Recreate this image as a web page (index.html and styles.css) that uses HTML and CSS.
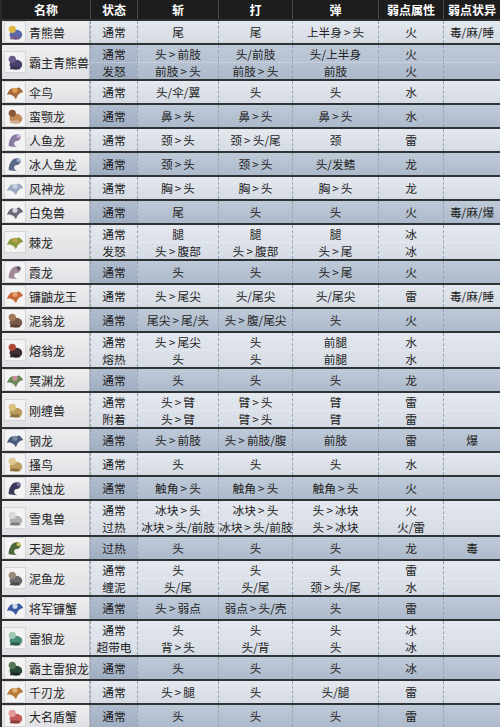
FILE: index.html
```html
<!DOCTYPE html>
<html lang="zh-CN">
<head>
<meta charset="utf-8">
<title>怪物弱点表</title>
<link rel="stylesheet" href="styles.css">
</head>
<body>
<div class="tbl">
  <div class="row head">
    <div class="c">名称</div><div class="c">状态</div><div class="c">斩</div><div class="c">打</div><div class="c">弹</div><div class="c">弱点属性</div><div class="c">弱点状异</div>
  </div>

  <div class="row lt">
    <div class="c name"><svg class="ic" viewBox="0 0 22 22"><rect width="22" height="22" fill="#f3f3f3"/><ellipse cx="12" cy="14" rx="7" ry="5.5" fill="#5a6aa8"/><circle cx="8" cy="8" r="4" fill="#e0b84a"/><path d="M5 19h12l-2-3H7z" fill="#7a5a8a"/></svg><span>青熊兽</span></div>
    <div class="c st">通常</div><div class="c">尾</div><div class="c">尾</div><div class="c">上半身 &gt; 头</div><div class="c">火</div><div class="c">毒/麻/睡</div>
  </div>

  <div class="row dk two">
    <div class="c name"><svg class="ic" viewBox="0 0 22 22"><rect width="22" height="22" fill="#f3f3f3"/><ellipse cx="12" cy="14" rx="7" ry="5.5" fill="#4a3f6a"/><circle cx="8" cy="8" r="4" fill="#6b5a8a"/><path d="M5 19h12l-2-3H7z" fill="#3a3050"/></svg><span>霸主青熊兽</span></div>
    <div class="c st"><div class="l">通常</div><div class="l">发怒</div></div>
    <div class="c"><div class="l">头 &gt; 前肢</div><div class="l">前肢 &gt; 头</div></div>
    <div class="c"><div class="l">头/前肢</div><div class="l">前肢 &gt; 头</div></div>
    <div class="c"><div class="l">头/上半身</div><div class="l">前肢</div></div>
    <div class="c"><div class="l">火</div><div class="l">火</div></div>
    <div class="c"><div class="l"></div><div class="l"></div></div>
  </div>

  <div class="row lt">
    <div class="c name"><svg class="ic" viewBox="0 0 22 22"><rect width="22" height="22" fill="#f3f3f3"/><path d="M2 14Q7 3 11 9Q15 2 20 11Q14 12 12 19Q9 13 2 14z" fill="#a86a3a"/><circle cx="11" cy="9" r="2.8" fill="#e0a050"/></svg><span>伞鸟</span></div>
    <div class="c st">通常</div><div class="c">头/伞/翼</div><div class="c">头</div><div class="c">头</div><div class="c">水</div><div class="c"></div>
  </div>

  <div class="row dk">
    <div class="c name"><svg class="ic" viewBox="0 0 22 22"><rect width="22" height="22" fill="#f3f3f3"/><ellipse cx="12" cy="14" rx="7" ry="5.5" fill="#c08a5a"/><circle cx="8" cy="8" r="4" fill="#8a5a3a"/><path d="M5 19h12l-2-3H7z" fill="#d0b090"/></svg><span>蛮颚龙</span></div>
    <div class="c st">通常</div><div class="c">鼻 &gt; 头</div><div class="c">鼻 &gt; 头</div><div class="c">鼻 &gt; 头</div><div class="c">水</div><div class="c"></div>
  </div>

  <div class="row lt">
    <div class="c name"><svg class="ic" viewBox="0 0 22 22"><rect width="22" height="22" fill="#f3f3f3"/><path d="M4 18C4 8 10 3 15 5C19 7 17 12 13 12C9 12 9 18 14 19Z" fill="#8a7aa0"/><circle cx="15" cy="7" r="2.2" fill="#c0b0d0"/></svg><span>人鱼龙</span></div>
    <div class="c st">通常</div><div class="c">颈 &gt; 头</div><div class="c">颈 &gt; 头/尾</div><div class="c">颈</div><div class="c">雷</div><div class="c"></div>
  </div>

  <div class="row dk">
    <div class="c name"><svg class="ic" viewBox="0 0 22 22"><rect width="22" height="22" fill="#f3f3f3"/><path d="M4 18C4 8 10 3 15 5C19 7 17 12 13 12C9 12 9 18 14 19Z" fill="#5a6a8a"/><circle cx="15" cy="7" r="2.2" fill="#9aaac0"/></svg><span>冰人鱼龙</span></div>
    <div class="c st">通常</div><div class="c">颈 &gt; 头</div><div class="c">颈 &gt; 头</div><div class="c">头/发鳍</div><div class="c">龙</div><div class="c"></div>
  </div>

  <div class="row lt">
    <div class="c name"><svg class="ic" viewBox="0 0 22 22"><rect width="22" height="22" fill="#f3f3f3"/><path d="M2 14Q7 3 11 9Q15 2 20 11Q14 12 12 19Q9 13 2 14z" fill="#9aa8c0"/><circle cx="11" cy="9" r="2.8" fill="#c8d0e0"/></svg><span>风神龙</span></div>
    <div class="c st">通常</div><div class="c">胸 &gt; 头</div><div class="c">胸 &gt; 头</div><div class="c">胸 &gt; 头</div><div class="c">龙</div><div class="c"></div>
  </div>

  <div class="row dk">
    <div class="c name"><svg class="ic" viewBox="0 0 22 22"><rect width="22" height="22" fill="#f3f3f3"/><path d="M2 14Q7 3 11 9Q15 2 20 11Q14 12 12 19Q9 13 2 14z" fill="#6a6a7a"/><circle cx="11" cy="9" r="2.8" fill="#d8d8e0"/></svg><span>白兔兽</span></div>
    <div class="c st">通常</div><div class="c">尾</div><div class="c">头</div><div class="c">头</div><div class="c">火</div><div class="c">毒/麻/爆</div>
  </div>

  <div class="row lt two">
    <div class="c name"><svg class="ic" viewBox="0 0 22 22"><rect width="22" height="22" fill="#f3f3f3"/><path d="M2 14Q7 3 11 9Q15 2 20 11Q14 12 12 19Q9 13 2 14z" fill="#8a9a3a"/><circle cx="11" cy="9" r="2.8" fill="#c0a050"/></svg><span>棘龙</span></div>
    <div class="c st"><div class="l">通常</div><div class="l">发怒</div></div>
    <div class="c"><div class="l">腿</div><div class="l">头 &gt; 腹部</div></div>
    <div class="c"><div class="l">腿</div><div class="l">头 &gt; 腹部</div></div>
    <div class="c"><div class="l">腿</div><div class="l">头 &gt; 尾</div></div>
    <div class="c"><div class="l">冰</div><div class="l">冰</div></div>
    <div class="c"><div class="l"></div><div class="l"></div></div>
  </div>

  <div class="row dk">
    <div class="c name"><svg class="ic" viewBox="0 0 22 22"><rect width="22" height="22" fill="#f3f3f3"/><path d="M4 18C4 8 10 3 15 5C19 7 17 12 13 12C9 12 9 18 14 19Z" fill="#a08a9a"/><circle cx="15" cy="7" r="2.2" fill="#6a5a6a"/></svg><span>霞龙</span></div>
    <div class="c st">通常</div><div class="c">头</div><div class="c">头</div><div class="c">头 &gt; 尾</div><div class="c">火</div><div class="c"></div>
  </div>

  <div class="row lt">
    <div class="c name"><svg class="ic" viewBox="0 0 22 22"><rect width="22" height="22" fill="#f3f3f3"/><path d="M2 14Q7 3 11 9Q15 2 20 11Q14 12 12 19Q9 13 2 14z" fill="#c86a3a"/><circle cx="11" cy="9" r="2.8" fill="#e0a070"/></svg><span>镰鼬龙王</span></div>
    <div class="c st">通常</div><div class="c">头 &gt; 尾尖</div><div class="c">头/尾尖</div><div class="c">头/尾尖</div><div class="c">雷</div><div class="c">毒/麻/睡</div>
  </div>

  <div class="row dk">
    <div class="c name"><svg class="ic" viewBox="0 0 22 22"><rect width="22" height="22" fill="#f3f3f3"/><ellipse cx="12" cy="14" rx="7" ry="5.5" fill="#7a5a4a"/><circle cx="8" cy="8" r="4" fill="#a07a5a"/><path d="M5 19h12l-2-3H7z" fill="#5a4030"/></svg><span>泥翁龙</span></div>
    <div class="c st">通常</div><div class="c">尾尖 &gt; 尾/头</div><div class="c">头 &gt; 腹/尾尖</div><div class="c">头</div><div class="c">火</div><div class="c"></div>
  </div>

  <div class="row lt two">
    <div class="c name"><svg class="ic" viewBox="0 0 22 22"><rect width="22" height="22" fill="#f3f3f3"/><ellipse cx="12" cy="14" rx="7" ry="5.5" fill="#3a3030"/><circle cx="8" cy="8" r="4" fill="#b04a3a"/><path d="M5 19h12l-2-3H7z" fill="#2a2020"/></svg><span>熔翁龙</span></div>
    <div class="c st"><div class="l">通常</div><div class="l">熔热</div></div>
    <div class="c"><div class="l">头 &gt; 尾尖</div><div class="l">头</div></div>
    <div class="c"><div class="l">头</div><div class="l">头</div></div>
    <div class="c"><div class="l">前腿</div><div class="l">前腿</div></div>
    <div class="c"><div class="l">水</div><div class="l">水</div></div>
    <div class="c"><div class="l"></div><div class="l"></div></div>
  </div>

  <div class="row dk">
    <div class="c name"><svg class="ic" viewBox="0 0 22 22"><rect width="22" height="22" fill="#f3f3f3"/><path d="M2 14Q7 3 11 9Q15 2 20 11Q14 12 12 19Q9 13 2 14z" fill="#6a8a5a"/><circle cx="11" cy="9" r="2.8" fill="#d08aa0"/></svg><span>冥渊龙</span></div>
    <div class="c st">通常</div><div class="c">头</div><div class="c">头</div><div class="c">头</div><div class="c">龙</div><div class="c"></div>
  </div>

  <div class="row lt two">
    <div class="c name"><svg class="ic" viewBox="0 0 22 22"><rect width="22" height="22" fill="#f3f3f3"/><ellipse cx="12" cy="14" rx="7" ry="5.5" fill="#b89a5a"/><circle cx="8" cy="8" r="4" fill="#d8c080"/><path d="M5 19h12l-2-3H7z" fill="#8a7040"/></svg><span>刚缠兽</span></div>
    <div class="c st"><div class="l">通常</div><div class="l">附着</div></div>
    <div class="c"><div class="l">头 &gt; 臂</div><div class="l">头 &gt; 臂</div></div>
    <div class="c"><div class="l">臂 &gt; 头</div><div class="l">臂 &gt; 头</div></div>
    <div class="c"><div class="l">臂</div><div class="l">臂</div></div>
    <div class="c"><div class="l">雷</div><div class="l">雷</div></div>
    <div class="c"><div class="l"></div><div class="l"></div></div>
  </div>

  <div class="row dk">
    <div class="c name"><svg class="ic" viewBox="0 0 22 22"><rect width="22" height="22" fill="#f3f3f3"/><path d="M2 14Q7 3 11 9Q15 2 20 11Q14 12 12 19Q9 13 2 14z" fill="#4a5a7a"/><circle cx="11" cy="9" r="2.8" fill="#7a8aa0"/></svg><span>钢龙</span></div>
    <div class="c st">通常</div><div class="c">头 &gt; 前肢</div><div class="c">头 &gt; 前肢/腹</div><div class="c">前肢</div><div class="c">雷</div><div class="c">爆</div>
  </div>

  <div class="row lt">
    <div class="c name"><svg class="ic" viewBox="0 0 22 22"><rect width="22" height="22" fill="#f3f3f3"/><ellipse cx="12" cy="14" rx="7" ry="5.5" fill="#c0a060"/><circle cx="8" cy="8" r="4" fill="#e0c890"/><path d="M5 19h12l-2-3H7z" fill="#8a7040"/></svg><span>搔鸟</span></div>
    <div class="c st">通常</div><div class="c">头</div><div class="c">头</div><div class="c">头</div><div class="c">水</div><div class="c"></div>
  </div>

  <div class="row dk">
    <div class="c name"><svg class="ic" viewBox="0 0 22 22"><rect width="22" height="22" fill="#f3f3f3"/><path d="M4 18C4 8 10 3 15 5C19 7 17 12 13 12C9 12 9 18 14 19Z" fill="#3a3a5a"/><circle cx="15" cy="7" r="2.2" fill="#7a7a9a"/></svg><span>黑蚀龙</span></div>
    <div class="c st">通常</div><div class="c">触角 &gt; 头</div><div class="c">触角 &gt; 头</div><div class="c">触角 &gt; 头</div><div class="c">火</div><div class="c"></div>
  </div>

  <div class="row lt two">
    <div class="c name"><svg class="ic" viewBox="0 0 22 22"><rect width="22" height="22" fill="#f3f3f3"/><ellipse cx="12" cy="14" rx="7" ry="5.5" fill="#b0b0b0"/><circle cx="8" cy="8" r="4" fill="#d8d8d8"/><path d="M5 19h12l-2-3H7z" fill="#7a7a7a"/></svg><span>雪鬼兽</span></div>
    <div class="c st"><div class="l">通常</div><div class="l">过热</div></div>
    <div class="c"><div class="l">冰块 &gt; 头</div><div class="l">冰块 &gt; 头/前肢</div></div>
    <div class="c"><div class="l">冰块 &gt; 头</div><div class="l">冰块 &gt; 头/前肢</div></div>
    <div class="c"><div class="l">头 &gt; 冰块</div><div class="l">头 &gt; 冰块</div></div>
    <div class="c"><div class="l">火</div><div class="l">火/雷</div></div>
    <div class="c"><div class="l"></div><div class="l"></div></div>
  </div>

  <div class="row dk">
    <div class="c name"><svg class="ic" viewBox="0 0 22 22"><rect width="22" height="22" fill="#f3f3f3"/><path d="M4 18C4 8 10 3 15 5C19 7 17 12 13 12C9 12 9 18 14 19Z" fill="#4a6a3a"/><circle cx="15" cy="7" r="2.2" fill="#d0c060"/></svg><span>天廻龙</span></div>
    <div class="c st">过热</div><div class="c">头</div><div class="c">头</div><div class="c">头</div><div class="c">龙</div><div class="c">毒</div>
  </div>

  <div class="row lt two">
    <div class="c name"><svg class="ic" viewBox="0 0 22 22"><rect width="22" height="22" fill="#f3f3f3"/><ellipse cx="12" cy="14" rx="7" ry="5.5" fill="#6a6a6a"/><circle cx="8" cy="8" r="4" fill="#9a8a7a"/><path d="M5 19h12l-2-3H7z" fill="#4a4a4a"/></svg><span>泥鱼龙</span></div>
    <div class="c st"><div class="l">通常</div><div class="l">缠泥</div></div>
    <div class="c"><div class="l">头</div><div class="l">头/尾</div></div>
    <div class="c"><div class="l">头</div><div class="l">头/尾</div></div>
    <div class="c"><div class="l">头</div><div class="l">颈 &gt; 头/尾</div></div>
    <div class="c"><div class="l">雷</div><div class="l">水</div></div>
    <div class="c"><div class="l"></div><div class="l"></div></div>
  </div>

  <div class="row dk">
    <div class="c name"><svg class="ic" viewBox="0 0 22 22"><rect width="22" height="22" fill="#f3f3f3"/><path d="M2 14Q7 3 11 9Q15 2 20 11Q14 12 12 19Q9 13 2 14z" fill="#3a5aa0"/><circle cx="11" cy="9" r="2.8" fill="#d0d8e8"/></svg><span>将军镰蟹</span></div>
    <div class="c st">通常</div><div class="c">头 &gt; 弱点</div><div class="c">弱点 &gt; 头/壳</div><div class="c">头</div><div class="c">雷</div><div class="c"></div>
  </div>

  <div class="row lt two">
    <div class="c name"><svg class="ic" viewBox="0 0 22 22"><rect width="22" height="22" fill="#f3f3f3"/><ellipse cx="12" cy="14" rx="7" ry="5.5" fill="#4a8a7a"/><circle cx="8" cy="8" r="4" fill="#a0c8b0"/><path d="M5 19h12l-2-3H7z" fill="#2a5a4a"/></svg><span>雷狼龙</span></div>
    <div class="c st"><div class="l">通常</div><div class="l">超带电</div></div>
    <div class="c"><div class="l">头</div><div class="l">背 &gt; 头</div></div>
    <div class="c"><div class="l">头</div><div class="l">头/背</div></div>
    <div class="c"><div class="l">头</div><div class="l">头</div></div>
    <div class="c"><div class="l">冰</div><div class="l">冰</div></div>
    <div class="c"><div class="l"></div><div class="l"></div></div>
  </div>

  <div class="row dk">
    <div class="c name"><svg class="ic" viewBox="0 0 22 22"><rect width="22" height="22" fill="#f3f3f3"/><ellipse cx="12" cy="14" rx="7" ry="5.5" fill="#2a4a3a"/><circle cx="8" cy="8" r="4" fill="#5a7a5a"/><path d="M5 19h12l-2-3H7z" fill="#1a2a20"/></svg><span>霸主雷狼龙</span></div>
    <div class="c st">通常</div><div class="c">头</div><div class="c">头</div><div class="c">头</div><div class="c">冰</div><div class="c"></div>
  </div>

  <div class="row lt">
    <div class="c name"><svg class="ic" viewBox="0 0 22 22"><rect width="22" height="22" fill="#f3f3f3"/><path d="M2 14Q7 3 11 9Q15 2 20 11Q14 12 12 19Q9 13 2 14z" fill="#b87a3a"/><circle cx="11" cy="9" r="2.8" fill="#e0b070"/></svg><span>千刃龙</span></div>
    <div class="c st">通常</div><div class="c">头 &gt; 腿</div><div class="c">头</div><div class="c">头/腿</div><div class="c">雷</div><div class="c"></div>
  </div>

  <div class="row dk">
    <div class="c name"><svg class="ic" viewBox="0 0 22 22"><rect width="22" height="22" fill="#f3f3f3"/><ellipse cx="12" cy="14" rx="7" ry="5.5" fill="#c05a5a"/><circle cx="8" cy="8" r="4" fill="#e09a9a"/><path d="M5 19h12l-2-3H7z" fill="#8a3a3a"/></svg><span>大名盾蟹</span></div>
    <div class="c st">通常</div><div class="c">头</div><div class="c">头</div><div class="c">头</div><div class="c">雷</div><div class="c"></div>
  </div>
</div>
</body>
</html>
```

FILE: styles.css
```css
html, body {
  margin: 0;
  padding: 0;
  background: #ffffff;
}

body {
  font-family: "Noto Sans CJK SC", "Noto Sans", "Liberation Sans", sans-serif;
  font-size: 11.7px;
  color: #222222;
}

.tbl {
  width: 500px;
  box-sizing: border-box;
  border-left: 2px solid #2a2a2a;
  overflow: hidden;
}

.row {
  display: grid;
  grid-template-columns: 88px 47px 81px 74px 86px 65px 57px;
  border-top: 2px solid #313236;
}

.c {
  box-sizing: border-box;
  text-align: center;
  white-space: nowrap;
  word-spacing: -0.5px;
  height: 22px;
  line-height: 22px;
  border-left: 1px dashed #97a1b0;
}

.c:first-child {
  border-left: 0;
}

.head {
  border-top: 0;
  background: #1d1d1d;
  color: #ffffff;
  font-weight: bold;
  font-size: 12px;
}

.head .c {
  height: 19px;
  line-height: 19px;
  border-left: 1px solid #4a4a4a;
}

.head .c:first-child {
  border-left: 0;
}

.two .c {
  height: 34px;
  line-height: 17px;
}

.l {
  box-sizing: border-box;
  height: 17px;
  line-height: 17px;
}

.l + .l {
  border-top: 1px dotted rgba(255, 255, 255, 0.45);
  line-height: 16px;
}

.lt .c {
  background: linear-gradient(#e4e8ef, #d5dbe4);
}

.dk .c {
  background: linear-gradient(#bfcad8, #adbacb);
}

.dk .st {
  background: linear-gradient(#b1bdcf, #a0aec2);
}

.row .name {
  display: flex;
  align-items: center;
  gap: 3px;
  padding-left: 2px;
  text-align: left;
  line-height: normal;
  font-size: 12px;
  background: linear-gradient(#eeeef0, #dfe0e3);
  border-right: 1px solid #b9bdc4;
}

.ic {
  width: 22px;
  height: 22px;
  flex: none;
  border: 1px solid #d4d4d6;
  box-sizing: border-box;
}
```
